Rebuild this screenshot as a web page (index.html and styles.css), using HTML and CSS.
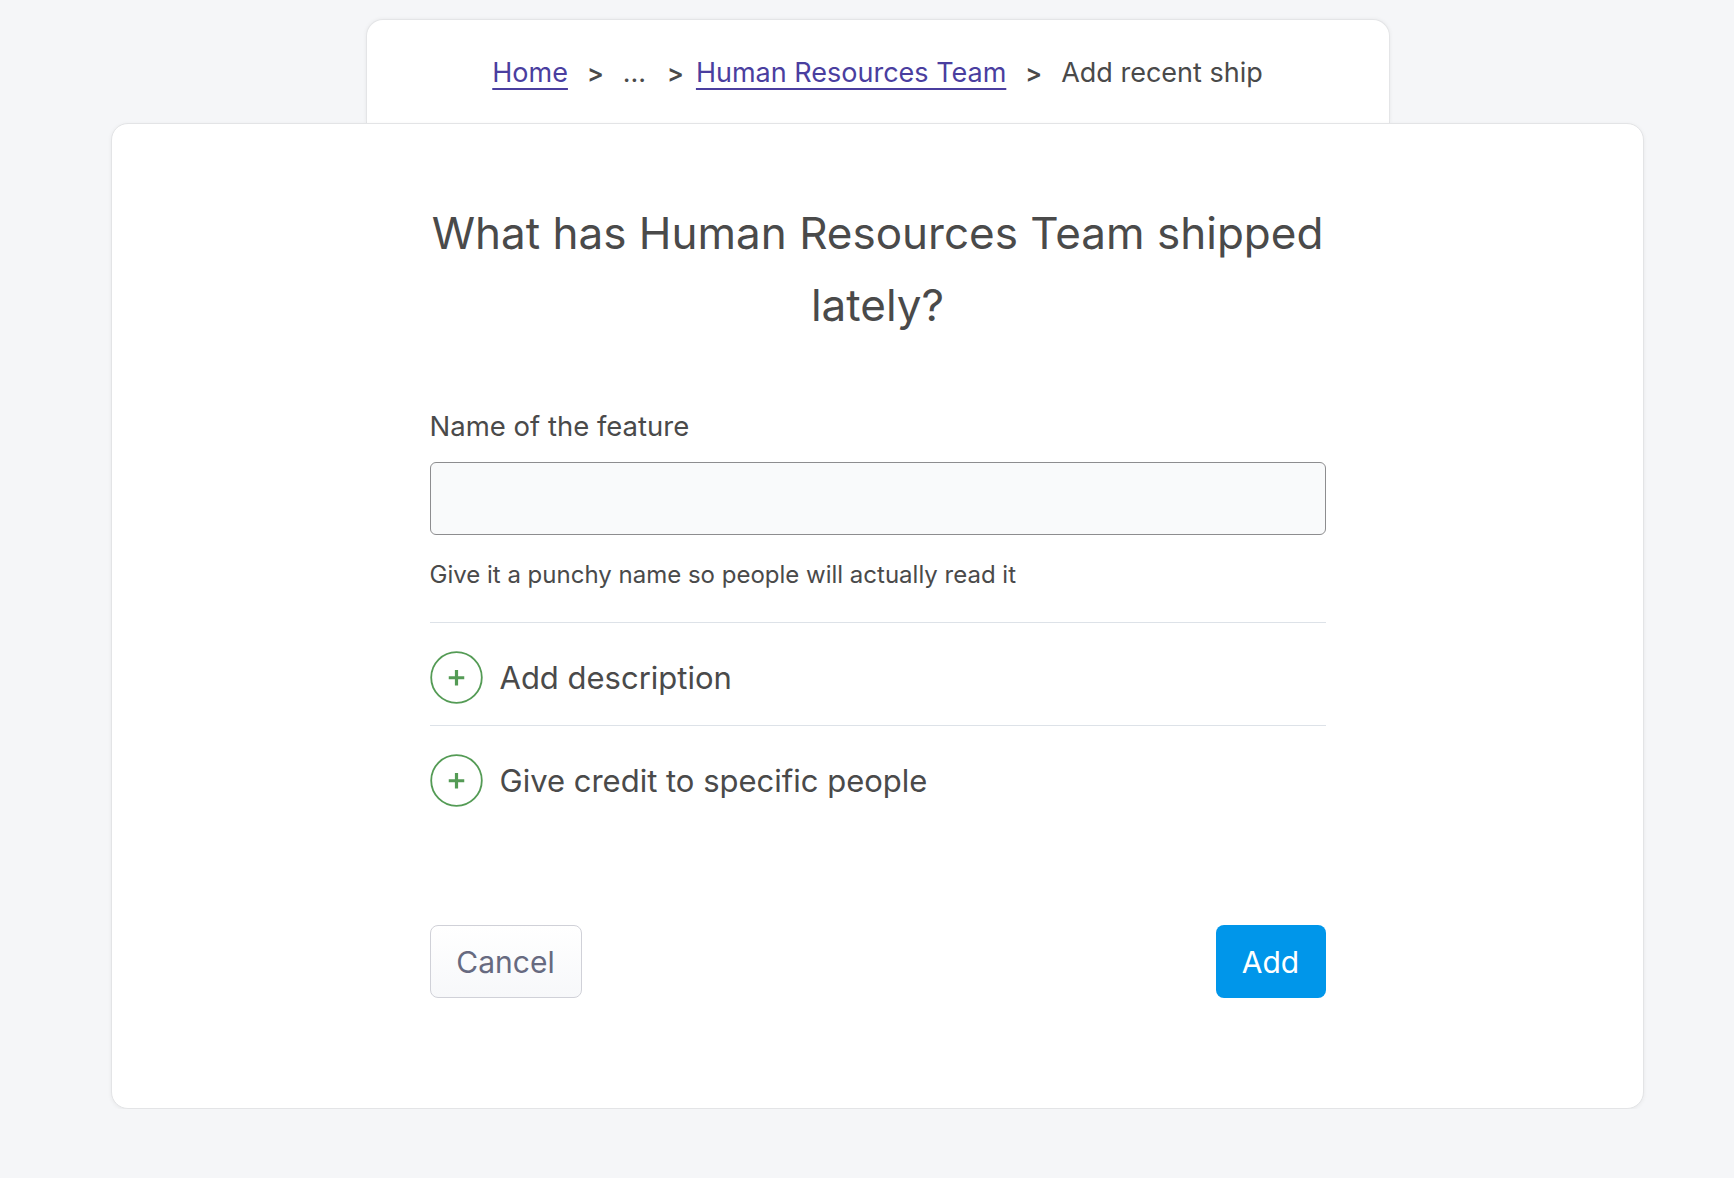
FILE: index.html
```html
<!DOCTYPE html>
<html lang="en">
<head>
<meta charset="utf-8">
<title>Add recent ship</title>
<link rel="stylesheet" href="styles.css">
</head>
<body>
<div class="page">
  <nav class="crumbs-card">
    <div class="crumbs">
      <a class="crumb-link" href="#">Home</a>
      <span class="sep">&gt;</span>
      <span class="crumb crumb-more">...</span>
      <span class="sep sep-tight">&gt;</span>
      <a class="crumb-link" href="#">Human Resources Team</a>
      <span class="sep">&gt;</span>
      <span class="crumb">Add recent ship</span>
    </div>
  </nav>
  <main class="card">
    <div class="form">
      <h1 class="title">What has Human Resources Team shipped lately?</h1>
      <label class="label" for="feature">Name of the feature</label>
      <input class="input" id="feature" type="text">
      <p class="help">Give it a punchy name so people will actually read it</p>
      <div class="row">
        <span class="plus"><svg width="53" height="53" viewBox="0 0 53 53"><circle cx="26.5" cy="26.5" r="25.3" fill="none" stroke="#549b55" stroke-width="1.8"/><path d="M26.5 19v15.5M18.75 26.75h15.5" stroke="#549b55" stroke-width="3.2"/></svg></span>
        <span class="row-text">Add description</span>
      </div>
      <div class="row last">
        <span class="plus"><svg width="53" height="53" viewBox="0 0 53 53"><circle cx="26.5" cy="26.5" r="25.3" fill="none" stroke="#549b55" stroke-width="1.8"/><path d="M26.5 19v15.5M18.75 26.75h15.5" stroke="#549b55" stroke-width="3.2"/></svg></span>
        <span class="row-text">Give credit to specific people</span>
      </div>
      <div class="actions">
        <button class="btn btn-cancel" type="button">Cancel</button>
        <button class="btn btn-add" type="button">Add</button>
      </div>
    </div>
  </main>
</div>
</body>
</html>
```

FILE: styles.css
```css
html, body {
  margin: 0;
  padding: 0;
  background: #f5f6f8;
}
body {
  font-family: Inter, "Liberation Sans", sans-serif;
  color: #4a4a4a;
}
.page {
  width: 1533px;
  margin-left: 111px;
  padding-top: 19px;
  display: flex;
  flex-direction: column;
  align-items: center;
}
.crumbs-card {
  width: 1024px;
  height: 104px;
  box-sizing: border-box;
  background: #fff;
  border: 1px solid #e4e5e7;
  border-bottom: none;
  border-radius: 17px 17px 0 0;
  box-shadow: 0 0 4px rgba(0,0,0,0.06);
  display: flex;
  justify-content: center;
  padding-top: 33px;
}
.crumbs {
  font-size: 27px;
  line-height: 40px;
  display: flex;
  align-items: baseline;
  color: #4a4a4a;
}
.crumb-link {
  color: #4a3e9f;
  text-decoration: underline;
  text-decoration-thickness: 2px;
  text-underline-offset: 6px;
}
.crumb-more {
  margin-right: 2px;
}
.sep {
  margin: 0 19px;
  font-size: 25px;
  font-weight: 600;
}
.sep-tight {
  margin-right: 12px;
}
.card {
  width: 1533px;
  height: 986px;
  box-sizing: border-box;
  background: #fff;
  border: 1px solid #e3e4e6;
  border-radius: 17px;
  box-shadow: 0 1px 4px rgba(0,0,0,0.06);
  display: flex;
  justify-content: center;
  position: relative;
}
.form {
  width: 896px;
  padding-top: 73px;
  display: flex;
  flex-direction: column;
}
.title {
  margin: 0;
  font-size: 44px;
  font-weight: 400;
  line-height: 72px;
  text-align: center;
  color: #4a4a4a;
}
.label {
  margin-top: 67px;
  font-size: 27.5px;
  line-height: 36px;
  color: #4a4a4a;
}
.input {
  margin-top: 18px;
  height: 73px;
  box-sizing: border-box;
  border: 1.5px solid #8d8d8f;
  border-radius: 6px;
  background: #f9fafb;
  font: inherit;
  font-size: 25px;
  padding: 0 16px;
}
.help {
  margin: 25px 0 0;
  font-size: 24px;
  line-height: 30px;
  color: #4a4a4a;
  padding-bottom: 32px;
  border-bottom: 1.5px solid #dde2e8;
}
.row {
  height: 103px;
  box-sizing: border-box;
  padding-top: 6px;
  display: flex;
  align-items: center;
  gap: 17px;
  border-bottom: 1.5px solid #dde2e8;
}
.row.last {
  border-bottom: none;
}
.plus {
  display: flex;
  width: 53px;
  height: 53px;
}
.row-text {
  font-size: 31px;
  color: #4a4a4a;
}
.actions {
  margin-top: 96px;
  display: flex;
  justify-content: space-between;
}
.btn {
  height: 73px;
  border-radius: 8px;
  font-family: Inter, "Liberation Sans", sans-serif;
  font-size: 30px;
  cursor: pointer;
}
.btn-cancel {
  width: 152px;
  background: linear-gradient(#ffffff, #f7f8fa);
  border: 1.5px solid #d0d1d8;
  color: #676a80;
}
.btn-add {
  width: 110px;
  background: #0096ea;
  border: none;
  color: #fff;
}
```
